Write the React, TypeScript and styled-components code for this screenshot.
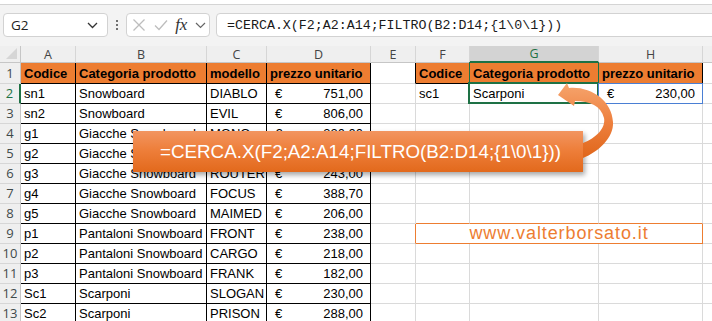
import React from "react";
import styled, { createGlobalStyle } from "styled-components";

const GRID = "#dadada";
const BLACK = "#000";
const ORANGE = "#ED7D31";
const GREEN = "#1e7145";
const BLUE = "#4a7fd4";

const GlobalStyle = createGlobalStyle`
  html, body { margin: 0; padding: 0; background: #fff; overflow: hidden; }
  #root { width: 712px; height: 321px; overflow: hidden; }
`;

const Page = styled.div`
  width: 712px;
  height: 321px;
  display: flex;
  flex-direction: column;
  font-family: "Liberation Sans", Arial, sans-serif;
  overflow: hidden;
  background: #fff;
`;

const TopStrip = styled.div`
  height: 4px;
  flex: none;
  background: #fff;
  border-bottom: 1px solid #d4d4d4;
`;

const FormulaBar = styled.div`
  height: 41px;
  flex: none;
  box-sizing: border-box;
  background: #f3f3f3;
  display: flex;
  align-items: flex-start;
  padding: 8px 0 0 3px;
`;

const Box = styled.div<{ $w?: number }>`
  box-sizing: border-box;
  height: 24px;
  background: #fff;
  border: 1px solid #d2d2d2;
  border-radius: 4px;
  display: flex;
  align-items: center;
  flex: none;
  width: ${(p) => (p.$w ? `${p.$w}px` : "auto")};
`;

const NameBox = styled(Box)`
  justify-content: space-between;
  padding: 0 9px 0 7px;
  font-family: "Open Sans", "Liberation Sans", sans-serif;
  font-size: 13.5px;
  color: #222;
`;

const Dots = styled.div`
  width: 18px;
  height: 24px;
  display: flex;
  flex-direction: column;
  align-items: center;
  justify-content: center;
  gap: 2px;
  flex: none;
  span {
    width: 2px;
    height: 2px;
    background: #444;
    border-radius: 1px;
  }
`;

const FxBox = styled(Box)`
  padding: 0 3px 0 5px;
  justify-content: space-between;
`;

const FxLabel = styled.span`
  font-family: "Liberation Serif", "Times New Roman", serif;
  font-style: italic;
  font-size: 17px;
  color: #333;
  line-height: 1;
  margin-top: -2px;
`;

const FormulaInput = styled(Box)`
  flex: 1;
  margin-left: 6px;
  margin-right: -10px;
  padding-left: 10px;
  font-family: "Liberation Mono", "Courier New", monospace;
  font-size: 13.3px;
  color: #1a1a1a;
`;

const Sheet = styled.div`
  position: relative;
  display: grid;
  grid-template-columns: 21px 55px 131px 60px 104px 45px 54px 129px 104px 30px;
  grid-template-rows: 17px 21px repeat(12, 20px);
  width: 733px;
`;

const Corner = styled.div`
  box-sizing: border-box;
  background: #efefef;
  border-right: 1px solid #c6c6c6;
  border-bottom: 1px solid #c6c6c6;
  position: relative;
  &::after {
    content: "";
    position: absolute;
    right: 3px;
    bottom: 3px;
    width: 11px;
    height: 11px;
    background: #d6d6d6;
    clip-path: polygon(100% 0, 100% 100%, 0 100%);
  }
`;

const ColHeader = styled.div<{ $sel?: boolean }>`
  box-sizing: border-box;
  display: flex;
  align-items: center;
  justify-content: center;
  background: ${(p) => (p.$sel ? "#d3d3d3" : "#efefef")};
  color: ${(p) => (p.$sel ? GREEN : "#444")};
  border-right: 1px solid #d6d6d6;
  border-bottom: ${(p) => (p.$sel ? `2px solid ${GREEN}` : "1px solid #c6c6c6")};
  font-family: "Open Sans", "Liberation Sans", sans-serif;
  font-size: 12.5px;
`;

const RowHeader = styled.div<{ $sel?: boolean }>`
  box-sizing: border-box;
  display: flex;
  align-items: flex-end;
  justify-content: center;
  padding-bottom: 1px;
  background: #efefef;
  color: ${(p) => (p.$sel ? GREEN : "#3f4a4a")};
  border-right: ${(p) => (p.$sel ? `2px solid ${GREEN}` : "1px solid #c6c6c6")};
  border-bottom: 1px solid #d6d6d6;
  font-family: "Open Sans", "Liberation Sans", sans-serif;
  font-size: 13px;
`;

type CellProps = {
  $r?: string;
  $b?: string;
  $bg?: string;
  $bold?: boolean;
  $color?: string;
  $center?: boolean;
  $span?: number;
  $frame?: string;
  $frameW?: number;
  $size?: number;
};

const Cell = styled.div<CellProps>`
  box-sizing: border-box;
  position: relative;
  min-width: 0;
  display: flex;
  align-items: flex-end;
  justify-content: ${(p) => (p.$center ? "center" : "flex-start")};
  padding: 0 3px 2px;
  line-height: 15px;
  white-space: nowrap;
  border-right: 1px solid ${(p) => p.$r ?? GRID};
  border-bottom: 1px solid ${(p) => p.$b ?? GRID};
  background: ${(p) => p.$bg ?? "#fff"};
  font-weight: ${(p) => (p.$bold ? 700 : 400)};
  color: ${(p) => p.$color ?? "#000"};
  font-size: ${(p) => p.$size ?? 13}px;
  letter-spacing: ${(p) => (p.$size ? "0.9px" : "normal")};
  grid-column: span ${(p) => p.$span ?? 1};
  ${(p) =>
    p.$frame
      ? `&::after {
    content: "";
    position: absolute;
    left: -${p.$frameW ?? 1}px;
    top: -${p.$frameW ?? 1}px;
    right: -1px;
    bottom: -1px;
    border: ${p.$frameW ?? 1}px solid ${p.$frame};
    z-index: 3;
    pointer-events: none;
  }`
      : ""}
`;

const PriceCell = styled(Cell)`
  justify-content: space-between;
  padding: 0 7px 2px 8px;
`;

const FillHandle = styled.span`
  position: absolute;
  right: -4px;
  bottom: -4px;
  width: 5px;
  height: 5px;
  background: ${GREEN};
  border: 1px solid #fff;
  z-index: 4;
`;

const Callout = styled.div`
  position: absolute;
  left: 133px;
  top: 85px;
  width: 450px;
  height: 41px;
  box-sizing: border-box;
  display: flex;
  align-items: center;
  padding-left: 27px;
  background: linear-gradient(180deg, #f29560 0%, #ee7f3b 45%, #e2691c 100%);
  box-shadow: 2px 3px 5px rgba(0, 0, 0, 0.35);
  color: #fff;
  font-family: "Liberation Sans", Arial, sans-serif;
  font-size: 18.8px;
  z-index: 5;
`;

const ArrowLayer = styled.svg`
  position: absolute;
  left: 0;
  top: 0;
  width: 712px;
  height: 275px;
  z-index: 6;
  pointer-events: none;
  overflow: visible;
`;

const TABLE: string[][] = [
  ["sn1", "Snowboard", "DIABLO", "751,00"],
  ["sn2", "Snowboard", "EVIL", "806,00"],
  ["g1", "Giacche Snowboard", "MONO", "320,00"],
  ["g2", "Giacche Snowboard", "BURST", "299,00"],
  ["g3", "Giacche Snowboard", "ROUTER", "243,00"],
  ["g4", "Giacche Snowboard", "FOCUS", "388,70"],
  ["g5", "Giacche Snowboard", "MAIMED", "206,00"],
  ["p1", "Pantaloni Snowboard", "FRONT", "238,00"],
  ["p2", "Pantaloni Snowboard", "CARGO", "218,00"],
  ["p3", "Pantaloni Snowboard", "FRANK", "182,00"],
  ["Sc1", "Scarponi", "SLOGAN", "230,00"],
  ["Sc2", "Scarponi", "PRISON", "288,00"],
];

const COLS = ["A", "B", "C", "D", "E", "F", "G", "H", ""];
const FORMULA = "=CERCA.X(F2;A2:A14;FILTRO(B2:D14;{1\\0\\1}))";

function renderRow(r: number): React.ReactNode[] {
  const out: React.ReactNode[] = [];
  out.push(
    <RowHeader key={`rh${r}`} $sel={r === 2}>
      {r}
    </RowHeader>
  );
  if (r === 1) {
    ["Codice", "Categoria prodotto", "modello", "prezzo unitario"].forEach((t, i) =>
      out.push(
        <Cell key={`c1${i}`} $bg={ORANGE} $bold $r={BLACK} $b={BLACK}>
          {t}
        </Cell>
      )
    );
    out.push(<Cell key="c1e" $r={BLACK} />);
    out.push(
      <Cell key="c1f" $bg={ORANGE} $bold $r={BLACK} $b={BLACK}>
        Codice
      </Cell>
    );
    out.push(
      <Cell key="c1g" $bg={ORANGE} $bold $r={BLACK} $b={BLACK} $frame={GREEN}>
        Categoria prodotto
      </Cell>
    );
    out.push(
      <Cell key="c1h" $bg={ORANGE} $bold $r={BLACK} $b={BLACK}>
        prezzo unitario
      </Cell>
    );
    out.push(<Cell key="c1i" />);
    return out;
  }
  const row = TABLE[r - 2];
  out.push(
    <Cell key={`a${r}`} $r={BLACK} $b={BLACK}>
      {row[0]}
    </Cell>
  );
  out.push(
    <Cell key={`b${r}`} $r={BLACK} $b={BLACK}>
      {row[1]}
    </Cell>
  );
  out.push(
    <Cell key={`c${r}`} $r={BLACK} $b={BLACK}>
      {row[2]}
    </Cell>
  );
  out.push(
    <PriceCell key={`d${r}`} $r={BLACK} $b={BLACK}>
      <span>€</span>
      <span>{row[3]}</span>
    </PriceCell>
  );
  if (r === 2) {
    out.push(<Cell key="e2" />);
    out.push(<Cell key="f2">sc1</Cell>);
    out.push(
      <Cell key="g2" $frame={GREEN} $frameW={2}>
        Scarponi
        <FillHandle />
      </Cell>
    );
    out.push(
      <PriceCell key="h2" $frame={BLUE}>
        <span>€</span>
        <span>230,00</span>
      </PriceCell>
    );
    out.push(<Cell key="i2" />);
    return out;
  }
  if (r === 9) {
    out.push(<Cell key="e9" $r={ORANGE} />);
    out.push(
      <Cell key="link" $span={3} $center $r={ORANGE} $b={ORANGE} $color={ORANGE} $size={18}>
        www.valterborsato.it
      </Cell>
    );
    out.push(<Cell key="i9" />);
    return out;
  }
  ["e", "f", "g", "h", "i"].forEach((c) =>
    out.push(<Cell key={`${c}${r}`} $b={r === 8 && ["f", "g", "h"].includes(c) ? ORANGE : undefined} />)
  );
  return out;
}

export default function App() {
  const rows: React.ReactNode[] = [];
  for (let r = 1; r <= 13; r++) rows.push(...renderRow(r));
  return (
    <Page>
      <GlobalStyle />
      <TopStrip />
      <FormulaBar>
        <NameBox $w={105}>
          <span>G2</span>
          <svg width="11" height="7" viewBox="0 0 11 7">
            <path d="M1 1 L5.5 5.5 L10 1" fill="none" stroke="#333" strokeWidth="1.3" />
          </svg>
        </NameBox>
        <Dots>
          <span />
          <span />
          <span />
        </Dots>
        <FxBox $w={84}>
          <svg width="14" height="14" viewBox="0 0 14 14">
            <path d="M1.5 1.5 L12.5 12.5 M12.5 1.5 L1.5 12.5" stroke="#bdbdbd" strokeWidth="1.3" />
          </svg>
          <svg width="14" height="14" viewBox="0 0 14 14">
            <path d="M1 7.5 L5 11.5 L13 2.5" fill="none" stroke="#bdbdbd" strokeWidth="1.3" />
          </svg>
          <FxLabel>fx</FxLabel>
          <svg width="11" height="7" viewBox="0 0 11 7">
            <path d="M1 1 L5.5 5.5 L10 1" fill="none" stroke="#666" strokeWidth="1.2" />
          </svg>
        </FxBox>
        <FormulaInput>{FORMULA}</FormulaInput>
      </FormulaBar>
      <Sheet>
        <Corner />
        {COLS.map((c, i) => (
          <ColHeader key={i} $sel={c === "G"}>
            {c}
          </ColHeader>
        ))}
        {rows}
        <ArrowLayer viewBox="0 46 712 275">
          <defs>
            <linearGradient id="arr" x1="0" y1="0" x2="0" y2="1">
              <stop offset="0" stopColor="#f6a56e" />
              <stop offset="0.5" stopColor="#ee8140" />
              <stop offset="1" stopColor="#e0661a" />
            </linearGradient>
          </defs>
          <path
            d="M558 95 L567 83 L569 88 C590 86 612 100 613 122 C614 138 598 152 583 158 L583 143 C596 138 606 128 604 118 C601 106 590 101 575 101 L574 106 Z"
            fill="url(#arr)"
          />
        </ArrowLayer>
        <Callout>{FORMULA}</Callout>
      </Sheet>
    </Page>
  );
}
